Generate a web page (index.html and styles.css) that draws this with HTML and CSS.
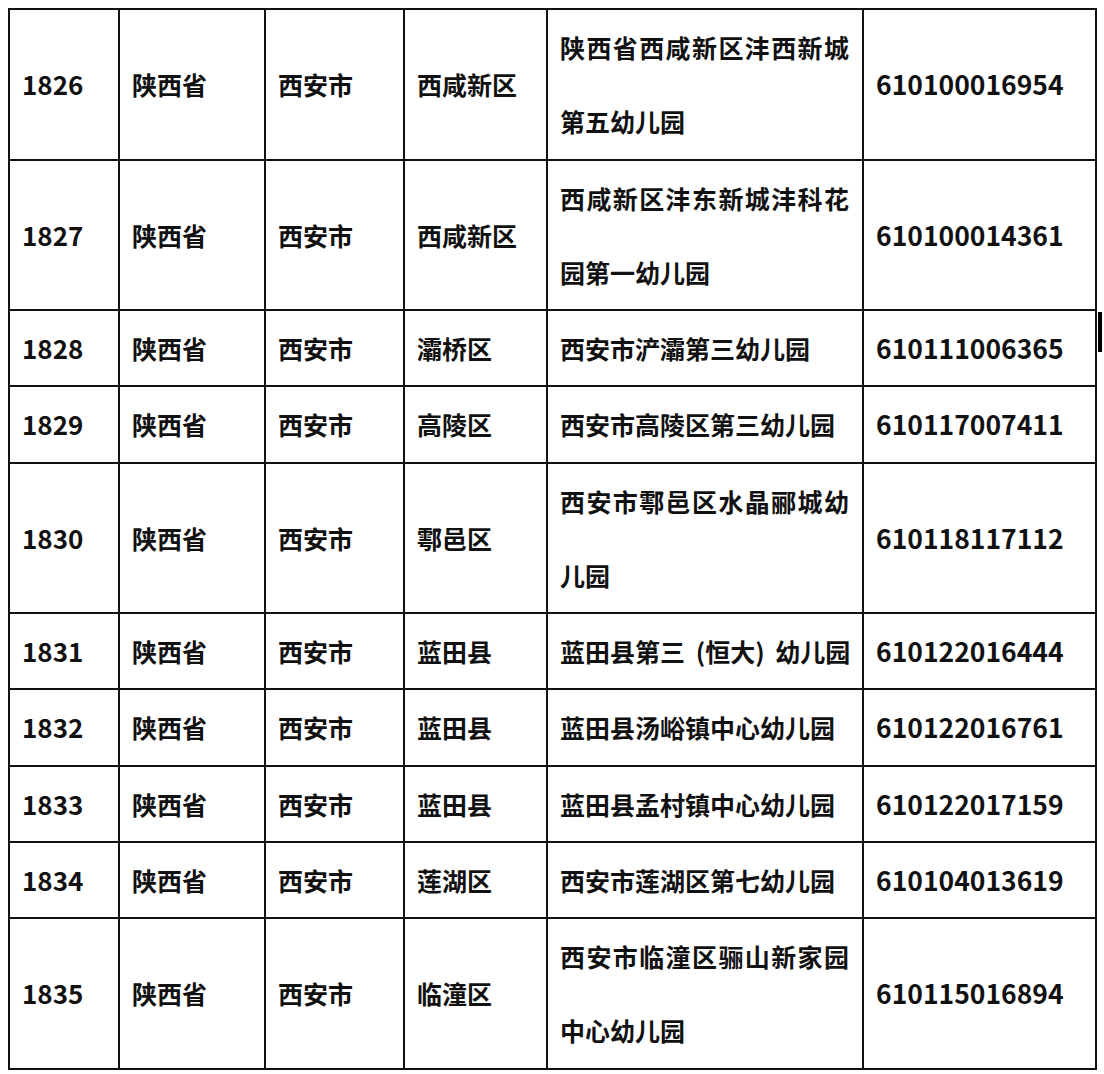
FILE: index.html
```html
<!DOCTYPE html>
<html lang="zh">
<head>
<meta charset="utf-8">
<link rel="stylesheet" href="styles.css">
</head>
<body>
<div class="wrap">
<table class="list">
<colgroup>
<col class="c1"><col class="c2"><col class="c3"><col class="c4"><col class="c5"><col class="c6">
</colgroup>
<tbody>
<tr><td class="num">1826</td><td>陕西省</td><td>西安市</td><td>西咸新区</td><td class="name"><span class="just">陕西省西咸新区沣西新城</span><br>第五幼儿园</td><td class="num code">610100016954</td></tr>
<tr><td class="num">1827</td><td>陕西省</td><td>西安市</td><td>西咸新区</td><td class="name"><span class="just">西咸新区沣东新城沣科花</span><br>园第一幼儿园</td><td class="num code">610100014361</td></tr>
<tr><td class="num">1828</td><td>陕西省</td><td>西安市</td><td>灞桥区</td><td class="name">西安市浐灞第三幼儿园</td><td class="num code">610111006365</td></tr>
<tr><td class="num">1829</td><td>陕西省</td><td>西安市</td><td>高陵区</td><td class="name">西安市高陵区第三幼儿园</td><td class="num code">610117007411</td></tr>
<tr><td class="num">1830</td><td>陕西省</td><td>西安市</td><td>鄠邑区</td><td class="name"><span class="just">西安市鄠邑区水晶郦城幼</span><br>儿园</td><td class="num code">610118117112</td></tr>
<tr><td class="num">1831</td><td>陕西省</td><td>西安市</td><td>蓝田县</td><td class="name"><span class="spaced">蓝田县第三 (恒大) 幼儿园</span></td><td class="num code">610122016444</td></tr>
<tr><td class="num">1832</td><td>陕西省</td><td>西安市</td><td>蓝田县</td><td class="name">蓝田县汤峪镇中心幼儿园</td><td class="num code">610122016761</td></tr>
<tr><td class="num">1833</td><td>陕西省</td><td>西安市</td><td>蓝田县</td><td class="name">蓝田县孟村镇中心幼儿园</td><td class="num code">610122017159</td></tr>
<tr><td class="num">1834</td><td>陕西省</td><td>西安市</td><td>莲湖区</td><td class="name">西安市莲湖区第七幼儿园</td><td class="num code">610104013619</td></tr>
<tr><td class="num">1835</td><td>陕西省</td><td>西安市</td><td>临潼区</td><td class="name"><span class="just">西安市临潼区骊山新家园</span><br>中心幼儿园</td><td class="num code">610115016894</td></tr>
</tbody>
</table>
</div>
</body>
</html>
```

FILE: styles.css
```css
html {
  background: #fff;
  overflow: hidden;
}
body {
  margin: 8px 0 0 8px;
  font-family: "Noto Sans CJK SC", "Noto Sans", sans-serif;
  color: #111;
}
.wrap {
  position: relative;
  width: 1096px;
  height: 1062px;
}
.wrap::after {
  content: "";
  position: absolute;
  left: 1090px;
  top: 304px;
  width: 4px;
  height: 40px;
  background: #000;
}
.list {
  border-collapse: collapse;
  table-layout: fixed;
  width: 1087px;
}
.c1 { width: 110px; }
.c2 { width: 146px; }
.c3 { width: 139px; }
.c4 { width: 143px; }
.c5 { width: 316px; }
.c6 { width: 233px; }
.list td {
  border: 2px solid #111;
  padding: 0 0 0 12px;
  font-size: 25px;
  line-height: 74.25px;
  font-weight: 700;
  vertical-align: middle;
  white-space: nowrap;
  overflow: hidden;
}
.list td.num {
  font-size: 26px;
}
.list td.code {
  font-size: 26.5px;
}
.just {
  letter-spacing: 1.4px;
}
.spaced {
  word-spacing: 5px;
}
```
